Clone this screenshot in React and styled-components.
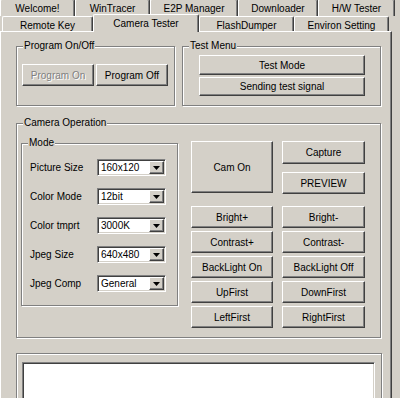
import React from 'react'
import styled, { createGlobalStyle } from 'styled-components'

const GlobalStyle = createGlobalStyle`
  html, body {
    margin: 0;
    padding: 0;
    background: #d4d0c8;
  }
  body {
    font-family: "Liberation Sans", Arial, sans-serif;
    font-size: 10px;
    color: #000;
    overflow: hidden;
  }
`

const Window = styled.div`
  width: 400px;
  height: 398px;
  overflow: hidden;
  background: #d4d0c8;
`

const TabRow = styled.div`
  display: flex;
  align-items: flex-end;
  height: ${p => p.$h}px;
  padding-left: ${p => p.$indent || 0}px;
`

const Tab = styled.div`
  position: relative;
  box-sizing: border-box;
  flex: none;
  width: ${p => p.$w}px;
  height: ${p => p.$h}px;
  padding-top: ${p => p.$pt}px;
  margin-bottom: ${p => (p.$active ? -1 : 0)}px;
  z-index: ${p => (p.$active ? 2 : 1)};
  background: #d4d0c8;
  border-top: 1px solid #fff;
  border-left: 1px solid #fff;
  border-right: 1px solid #404040;
  border-radius: 2px 2px 0 0;
  box-shadow: inset -1px 0 0 #808080;
  line-height: 12px;
  text-align: center;
  white-space: nowrap;
`

const Page = styled.div`
  box-sizing: border-box;
  width: 392px;
  height: 367px;
  padding: 14px 10px 0 15px;
  border-top: 1px solid #fff;
  border-left: 1px solid #fff;
  border-right: 1px solid #404040;
  box-shadow: inset -1px 0 0 #808080;
`

const TopRow = styled.div`
  display: flex;
  gap: 7px;
`

const Group = styled.div`
  box-sizing: border-box;
  flex: none;
  width: ${p => p.$w}px;
  height: ${p => p.$h}px;
  margin-top: ${p => p.$mt || 0}px;
  border: 1px solid #808080;
  box-shadow: 1px 1px 0 #fff, inset 1px 1px 0 #fff;
`

const Caption = styled.div`
  display: table;
  margin: -7px 0 0 6px;
  padding: 0 1px;
  line-height: 12px;
  background: #d4d0c8;
`

const ButtonRow = styled.div`
  display: flex;
  gap: 2px;
  margin-top: ${p => p.$mt}px;
  padding-left: ${p => p.$pl}px;
`

const ButtonStack = styled.div`
  display: flex;
  flex-direction: column;
  gap: ${p => p.$gap}px;
  margin-top: ${p => p.$mt || 0}px;
  padding-left: ${p => p.$pl || 0}px;
`

const Button = styled.button`
  box-sizing: border-box;
  flex: none;
  width: ${p => p.$w}px;
  height: ${p => p.$h}px;
  margin: 0;
  padding: 0;
  font: inherit;
  color: #000;
  background: #d4d0c8;
  border: 1px solid;
  border-color: #fff #404040 #404040 #fff;
  box-shadow: inset -1px -1px 0 #808080;
  white-space: nowrap;
  &:disabled {
    color: #808080;
    text-shadow: 1px 1px 0 #fff;
  }
`

const CameraBody = styled.div`
  display: flex;
  align-items: flex-start;
  gap: 13px;
  margin-top: 12px;
  padding-left: 4px;
`

const Form = styled.div`
  display: flex;
  flex-direction: column;
  gap: 12px;
  margin-top: 10px;
  padding-left: 8px;
`

const FieldRow = styled.div`
  display: flex;
  align-items: center;
  height: 17px;
`

const Label = styled.div`
  width: 67px;
  line-height: 12px;
  white-space: nowrap;
`

const Combo = styled.div`
  box-sizing: border-box;
  display: flex;
  width: 69px;
  height: 17px;
  padding: 1px;
  background: #fff;
  border: 1px solid;
  border-color: #808080 #fff #fff #808080;
  box-shadow: inset 1px 1px 0 #404040, inset -1px -1px 0 #d4d0c8;
`

const ComboText = styled.div`
  flex: 1;
  padding-left: 2px;
  line-height: 13px;
  white-space: nowrap;
`

const DropButton = styled.div`
  box-sizing: border-box;
  display: flex;
  align-items: center;
  justify-content: center;
  width: 15px;
  height: 13px;
  background: #d4d0c8;
  border: 1px solid;
  border-color: #fff #404040 #404040 #fff;
  box-shadow: inset -1px -1px 0 #808080;
`

const ButtonPanel = styled.div`
  display: flex;
  flex-direction: column;
  gap: 12px;
`

const TopButtons = styled.div`
  display: flex;
  gap: 9px;
`

const ButtonGrid = styled.div`
  display: grid;
  grid-template-columns: 82px 83px;
  grid-auto-rows: 22px;
  column-gap: 9px;
  row-gap: 3px;
`

const LogPad = styled.div`
  padding: 8px 0 0 5px;
`

const LogBox = styled.div`
  box-sizing: border-box;
  width: 353px;
  height: 60px;
  background: #fff;
  border: 1px solid;
  border-color: #808080 #fff #fff #808080;
  box-shadow: inset 1px 1px 0 #404040, inset -1px -1px 0 #d4d0c8;
`

const backTabs = [
  ['Welcome!', 75],
  ['WinTracer', 75],
  ['E2P Manager', 88],
  ['Downloader', 80],
  ['H/W Tester', 77]
]

const frontTabs = [
  ['Remote Key', 91],
  ['Camera Tester', 106],
  ['FlashDumper', 95],
  ['Environ Setting', 95]
]

const modes = [
  ['Picture Size', '160x120'],
  ['Color Mode', '12bit'],
  ['Color tmprt', '3000K'],
  ['Jpeg Size', '640x480'],
  ['Jpeg Comp', 'General']
]

const pairs = [
  ['Bright+', 'Bright-'],
  ['Contrast+', 'Contrast-'],
  ['BackLight On', 'BackLight Off'],
  ['UpFirst', 'DownFirst'],
  ['LeftFirst', 'RightFirst']
]

const Arrow = () => (
  <svg width="7" height="4" viewBox="0 0 7 4">
    <path d="M0 0h7L3.5 4z" fill="#000" />
  </svg>
)

const App = () => {
  return (
    <Window>
      <GlobalStyle />
      <TabRow $h={16}>
        {backTabs.map(([name, w]) => (
          <Tab key={name} $w={w} $h={17} $pt={3}>{name}</Tab>
        ))}
      </TabRow>
      <TabRow $h={15} $indent={2}>
        {frontTabs.map(([name, w]) => {
          const active = name === 'Camera Tester'
          return (
            <Tab key={name} $w={w} $h={active ? 18 : 15} $pt={3} $active={active}>
              {name}
            </Tab>
          )
        })}
      </TabRow>
      <Page>
        <TopRow>
          <Group $w={159} $h={60}>
            <Caption>Program On/Off</Caption>
            <ButtonRow $mt={12} $pl={5}>
              <Button $w={72} $h={22} disabled>Program On</Button>
              <Button $w={72} $h={22}>Program Off</Button>
            </ButtonRow>
          </Group>
          <Group $w={199} $h={60}>
            <Caption>Test Menu</Caption>
            <ButtonStack $gap={2} $mt={3} $pl={16}>
              <Button $w={166} $h={20}>Test Mode</Button>
              <Button $w={166} $h={19}>Sending test signal</Button>
            </ButtonStack>
          </Group>
        </TopRow>

        <Group $w={365} $h={215} $mt={17}>
          <Caption>Camera Operation</Caption>
          <CameraBody>
            <Group $w={157} $h={163} $mt={2}>
              <Caption>Mode</Caption>
              <Form>
                {modes.map(([label, value]) => (
                  <FieldRow key={label}>
                    <Label>{label}</Label>
                    <Combo>
                      <ComboText>{value}</ComboText>
                      <DropButton><Arrow /></DropButton>
                    </Combo>
                  </FieldRow>
                ))}
              </Form>
            </Group>
            <ButtonPanel>
              <TopButtons>
                <Button $w={82} $h={52}>Cam On</Button>
                <ButtonStack $gap={8}>
                  <Button $w={83} $h={23}>Capture</Button>
                  <Button $w={83} $h={22}>PREVIEW</Button>
                </ButtonStack>
              </TopButtons>
              <ButtonGrid>
                {pairs.map(([a, b]) => (
                  <React.Fragment key={a}>
                    <Button $w={82} $h={22}>{a}</Button>
                    <Button $w={83} $h={22}>{b}</Button>
                  </React.Fragment>
                ))}
              </ButtonGrid>
            </ButtonPanel>
          </CameraBody>
        </Group>

        <Group $w={366} $h={60} $mt={15}>
          <LogPad>
            <LogBox />
          </LogPad>
        </Group>
      </Page>
    </Window>
  )
}

export default App
